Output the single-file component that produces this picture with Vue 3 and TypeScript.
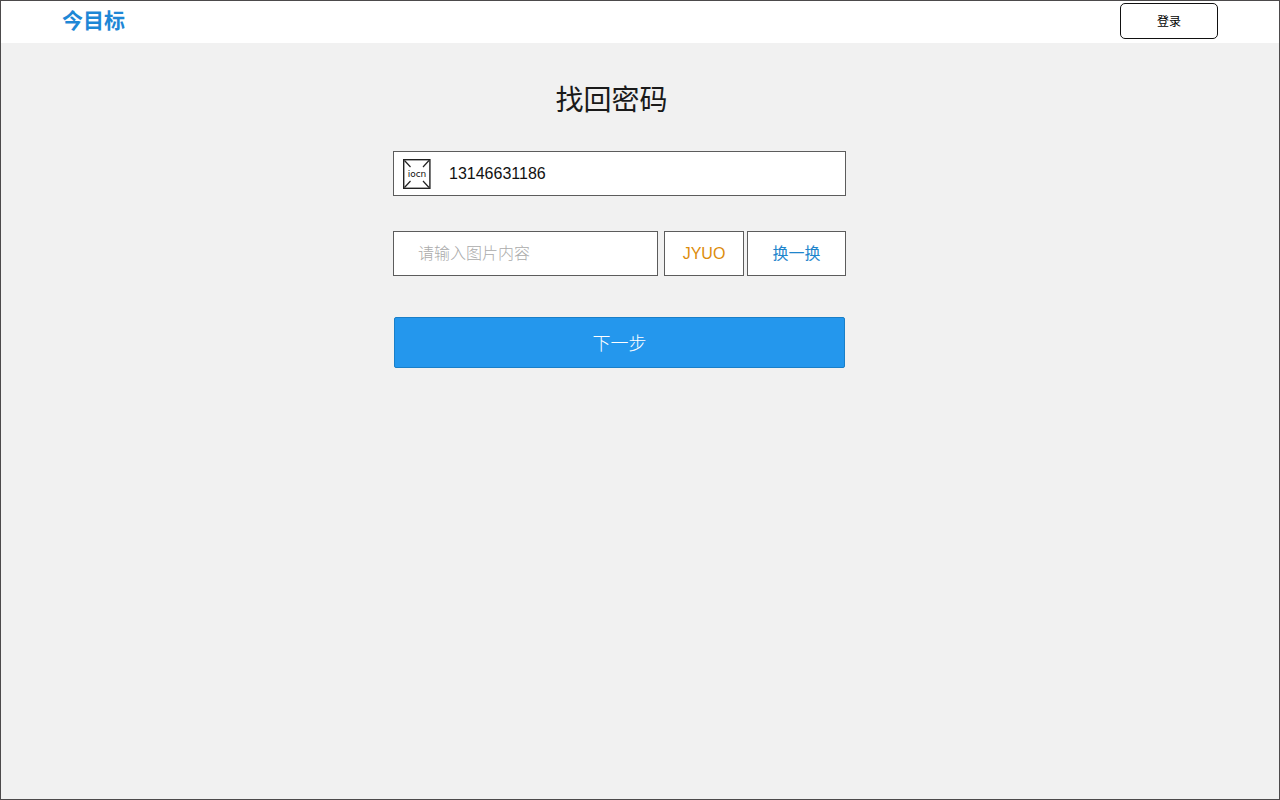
<script setup lang="ts">
import { ref } from 'vue'

const phone = ref('13146631186')
const answer = ref('')
const codes = ['JYUO', 'KMTA', 'WPEH', 'RXZL']
const codeIndex = ref(0)

function nextCode(): void {
  codeIndex.value = (codeIndex.value + 1) % codes.length
}
</script>

<template>
  <div class="page">
    <header class="bar">
      <a class="logo" href="#">今目标</a>
      <button class="login" type="button">登录</button>
    </header>
    <main class="content">
      <h1 class="title">找回密码</h1>
      <form class="form" @submit.prevent>
        <div class="field phone">
          <svg class="icon" viewBox="0 0 28 30" width="28" height="30" aria-hidden="true">
            <rect x="0.7" y="0.7" width="26.2" height="28.6" fill="#fff" stroke="#222" stroke-width="1.4" />
            <path d="M1.5 1.5l6 6.5M26 1.5l-6 6.5M1.5 28.5l6-6.5M26 28.5l-6-6.5" fill="none" stroke="#222" stroke-width="1.2" />
            <text x="14" y="18" text-anchor="middle" class="icon-text">iocn</text>
          </svg>
          <input v-model="phone" class="phone-input" type="tel" aria-label="手机号" />
        </div>
        <div class="captcha">
          <input v-model="answer" class="field answer" type="text" placeholder="请输入图片内容" aria-label="图片内容" />
          <span class="field code">{{ codes[codeIndex] }}</span>
          <button class="field swap" type="button" @click="nextCode">换一换</button>
        </div>
        <button class="next" type="submit">下一步</button>
      </form>
    </main>
  </div>
</template>

<style>
body {
  background: #f1f1f1;
}
</style>

<style scoped>
.page,
.page * {
  box-sizing: border-box;
}
.page {
  min-height: 100vh;
  border: 1px solid #4c4a4b;
  background: #f1f1f1;
  font-family: "Liberation Sans", "Noto Sans CJK SC", sans-serif;
  color: #1a1a1a;
}
button,
input {
  font-family: inherit;
  margin: 0;
}
button {
  padding: 0 0 2px;
  cursor: pointer;
}
.bar {
  display: flex;
  align-items: center;
  justify-content: space-between;
  height: 42px;
  padding: 0 61px 2px;
  background: #fff;
}
.logo {
  color: #1e87d6;
  font-size: 21px;
  line-height: 24px;
  font-weight: 700;
  text-decoration: none;
}
.login {
  width: 98px;
  height: 36px;
  border: 1px solid #111;
  border-radius: 5px;
  background: #fff;
  color: #000;
  font-size: 12px;
}
.content {
  display: flex;
  flex-direction: column;
  align-items: center;
  padding: 38px 41px 0 0;
}
.title {
  margin: 0;
  padding-right: 16px;
  font-size: 28px;
  line-height: 40px;
  font-weight: 400;
}
.form {
  display: flex;
  flex-direction: column;
  width: 100%;
  max-width: 453px;
  margin-top: 30px;
}
.field {
  height: 45px;
  border: 1px solid #5c5c5c;
  border-radius: 0;
  background: #fff;
  font-size: 16px;
}
.phone {
  display: flex;
  align-items: center;
  padding: 0 9px;
}
.icon {
  flex: none;
}
.icon-text {
  font-family: "DejaVu Sans", sans-serif;
  font-size: 9px;
  fill: #111;
}
.phone-input {
  flex: 1;
  min-width: 0;
  height: 40px;
  padding: 0 0 0 18px;
  border: 0;
  outline: 0;
  background: none;
  color: #111;
  font-size: 16px;
}
.captcha {
  display: flex;
  margin-top: 35px;
}
.answer {
  flex: 1;
  min-width: 0;
  padding: 0 24px;
  outline: 0;
  font-weight: 300;
}
.answer::placeholder {
  color: #aaa;
}
.code {
  display: flex;
  align-items: center;
  justify-content: center;
  width: 80px;
  margin-left: 6px;
  color: #dc8c0c;
}
.swap {
  width: 99px;
  margin-left: 3px;
  padding-bottom: 4px;
  color: #1f85cc;
  font-weight: 400;
}
.next {
  height: 51px;
  margin: 41px 1px 0;
  border: 1px solid #1a7fc8;
  border-radius: 2px;
  background: #2497ed;
  color: #fff;
  font-size: 18px;
  font-weight: 300;
}
</style>
